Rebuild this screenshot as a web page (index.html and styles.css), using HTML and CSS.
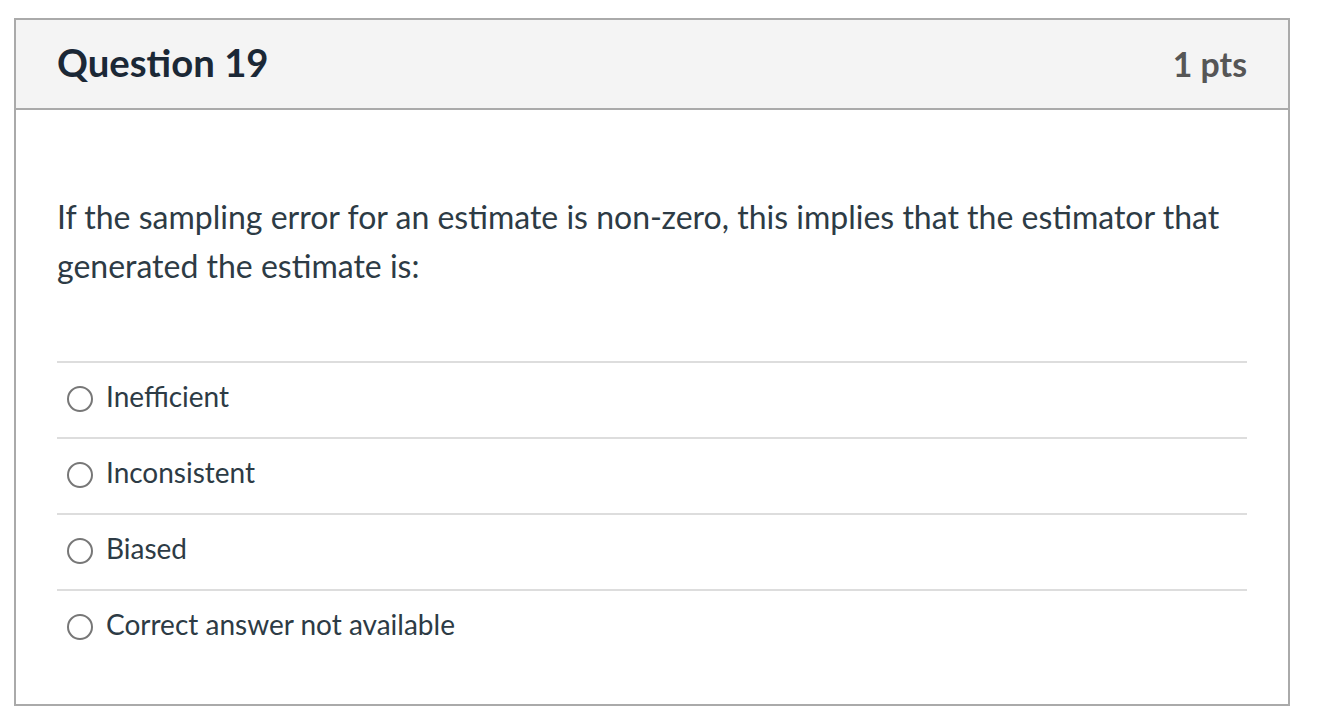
FILE: index.html
```html
<!DOCTYPE html>
<html>
	<head>
		<meta charset="utf-8">
		<title>Question 19</title>
		<link rel="stylesheet" href="styles.css">
	</head>
	<body>
		<div class="question">
			<div class="question-header">
				<h2 class="question-title">Question 19</h2>
				<span class="question-points">1 pts</span>
			</div>
			<div class="question-body">
				<p class="question-text">If the sampling error for an estimate is non-zero, this implies that the estimator that generated the estimate is:</p>
				<div class="answers">
					<label class="answer"><span class="radio"></span>Inefficient</label>
					<label class="answer"><span class="radio"></span>Inconsistent</label>
					<label class="answer"><span class="radio"></span>Biased</label>
					<label class="answer"><span class="radio"></span>Correct answer not available</label>
				</div>
			</div>
		</div>
	</body>
</html>
```

FILE: styles.css
```css
body {
	margin: 0;
	background-color: #fff;
	font-family: Lato, "Open Sans", sans-serif;
	color: #2d3b45;
}

.question {
	width: 1272px;
	height: 684px;
	margin: 18px 0 0 14px;
	border: 2px solid #aaa;
}

/* 标题栏 */
.question-header {
	display: flex;
	justify-content: space-between;
	align-items: center;
	height: 88px;
	padding: 0 41px;
	background-color: #f4f4f4;
	border-bottom: 2px solid #aaa;
}

.question-title {
	margin: 0 0 4px;
	font-size: 38.3px;
	font-weight: 700;
	color: #1b2836;
}

.question-points {
	font-size: 33.8px;
	font-weight: 700;
	color: #565656;
}

/* 题目内容 */
.question-body {
	padding: 0 41px;
}

.question-text {
	margin: 0;
	padding: 82px 0 71px;
	font-size: 32px;
	line-height: 49px;
}

/* 选项，文字比单选圈略高 */
.answer {
	display: flex;
	align-items: center;
	height: 66px;
	padding-bottom: 8px;
	border-top: 2px solid #ddd;
	font-size: 28px;
}

.radio {
	width: 22px;
	height: 22px;
	margin: 6px 13px 0 10px;
	border: 2px solid #777;
	border-radius: 50%;
}
```
